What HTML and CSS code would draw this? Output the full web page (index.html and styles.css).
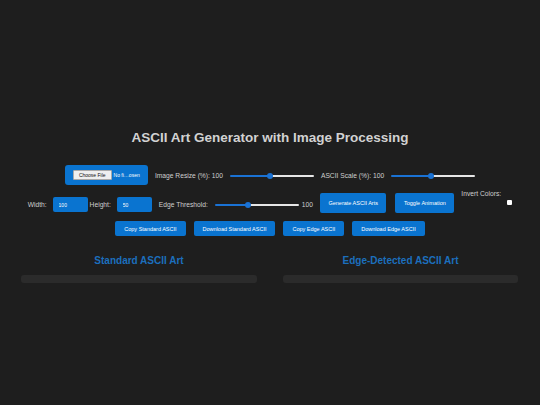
FILE: index.html
```html
<!DOCTYPE html>
<html lang="en">
<head>
<meta charset="utf-8">
<title>ASCII Art Generator with Image Processing</title>
<link rel="stylesheet" href="styles.css">
</head>
<body>
<main class="page">
  <h1 class="title">ASCII Art Generator with Image Processing</h1>

  <div class="row row-1">
    <input type="file" class="file" accept="image/*">
    <span class="lbl">Image Resize (%): 100</span>
    <input type="range" class="slider" min="10" max="200" value="100" style="--p:47%">
    <span class="lbl">ASCII Scale (%): 100</span>
    <input type="range" class="slider" min="10" max="200" value="100" style="--p:47%">
  </div>

  <div class="row row-2">
    <div class="dims">
      <span class="lbl">Width:</span>
      <input type="number" class="num" value="100">
      <span class="lbl">Height:</span>
      <input type="number" class="num" value="50">
    </div>
    <div class="edge">
      <span class="lbl">Edge Threshold:</span>
      <input type="range" class="slider" min="0" max="255" value="100" style="--p:39%">
      <span class="lbl">100</span>
    </div>
    <button class="btn btn-tall">Generate ASCII Arts</button>
    <button class="btn btn-tall btn-toggle">Toggle Animation</button>
    <label class="invert">
      <span class="lbl">Invert Colors:</span>
      <input type="checkbox" class="check">
    </label>
  </div>

  <div class="row row-3">
    <button class="btn">Copy Standard ASCII</button>
    <button class="btn">Download Standard ASCII</button>
    <button class="btn">Copy Edge ASCII</button>
    <button class="btn">Download Edge ASCII</button>
  </div>

  <section class="outputs">
    <div class="col">
      <h2 class="col-title">Standard ASCII Art</h2>
      <pre class="art"></pre>
    </div>
    <div class="col">
      <h2 class="col-title">Edge-Detected ASCII Art</h2>
      <pre class="art"></pre>
    </div>
  </section>
</main>
</body>
</html>
```

FILE: styles.css
```css
html, body {
  margin: 0;
  padding: 0;
  background: #1e1e1e;
}

body {
  font-family: "Liberation Sans", Arial, sans-serif;
  color: #d4d4d4;
}

.page {
  padding-top: 130px;
}

.title {
  margin: 0 0 19px;
  font-size: 13.5px;
  line-height: 16px;
  font-weight: bold;
  text-align: center;
  color: #d2d2d2;
}

.row {
  display: flex;
  justify-content: center;
  align-items: center;
  gap: 7px;
  height: 20px;
  margin-bottom: 8px;
}

.row-3 {
  gap: 8px;
  height: 15px;
}

.lbl {
  font-size: 6.7px;
  line-height: 8px;
  color: #cfcfcf;
  white-space: nowrap;
}

/* file picker */
.file {
  width: 83px;
  height: 20px;
  box-sizing: border-box;
  padding: 5px 8px 0;
  background: #0a74d0;
  color: #fff;
  border: none;
  border-radius: 3px;
  font-family: "Liberation Sans", Arial, sans-serif;
  font-size: 5px;
  line-height: 8px;
}

.file::file-selector-button {
  font-family: "Liberation Sans", Arial, sans-serif;
  font-size: 5px;
  line-height: 6px;
  padding: 1px 5px;
  margin-right: 2px;
  border: 0.5px solid #aaa;
  border-radius: 1px;
  background: #efefef;
  color: #111;
}

/* sliders */
.slider {
  -webkit-appearance: none;
  appearance: none;
  width: 84px;
  height: 6px;
  margin: 0;
  background: transparent;
}

.slider::-webkit-slider-runnable-track {
  height: 2px;
  border-radius: 1px;
  background: linear-gradient(to right, #1a72d4 var(--p), #e6e6e6 var(--p));
}

.slider::-webkit-slider-thumb {
  -webkit-appearance: none;
  width: 6px;
  height: 6px;
  margin-top: -2px;
  border-radius: 50%;
  background: #1a72d4;
  border: none;
}

.row-1 .slider {
  margin-top: 2px;
}

.row-1 .lbl {
  margin-top: 1px;
}

/* row 2 */
.dims .lbl,
.edge .lbl,
.num,
.edge .slider {
  margin-top: 3px;
}

.dims,
.edge {
  display: flex;
  align-items: center;
}

.dims .lbl {
  margin-right: 6px;
}

.num + .lbl {
  margin-left: 2px;
}

.num {
  width: 35px;
  height: 15px;
  box-sizing: border-box;
  padding: 0 6px;
  border: none;
  border-radius: 2px;
  background: #0a74d0;
  color: #fff;
  font-family: "Liberation Sans", Arial, sans-serif;
  font-size: 5px;
  -moz-appearance: textfield;
}

.num::-webkit-outer-spin-button,
.num::-webkit-inner-spin-button {
  -webkit-appearance: none;
  margin: 0;
}

.edge .slider {
  margin-left: 7px;
  margin-right: 3px;
}

.btn {
  padding: 4.5px 9px;
  border: none;
  border-radius: 2px;
  background: #0a74d0;
  color: #fff;
  font-family: "Liberation Sans", Arial, sans-serif;
  font-size: 5.5px;
  line-height: 6px;
  cursor: pointer;
}

.btn-tall {
  height: 20px;
  padding: 0 8.5px;
}

.btn-toggle {
  margin-left: 2px;
}

.invert {
  display: grid;
  width: 51px;
  align-self: flex-start;
  margin-top: -3px;
}

.check {
  -webkit-appearance: none;
  appearance: none;
  justify-self: end;
  width: 5px;
  height: 5px;
  margin: 2px 0 0;
  border-radius: 1px;
  background: #fff;
}

/* outputs */
.outputs {
  display: grid;
  grid-template-columns: 236px 235px;
  column-gap: 26px;
  padding: 12px 0 0 21px;
}

.col-title {
  margin: 0 0 9px;
  font-size: 10px;
  line-height: 10px;
  font-weight: bold;
  text-align: center;
  color: #1c6fbd;
}

.art {
  margin: 0;
  height: 8px;
  border-radius: 3px;
  background: #2b2b2b;
}
```
